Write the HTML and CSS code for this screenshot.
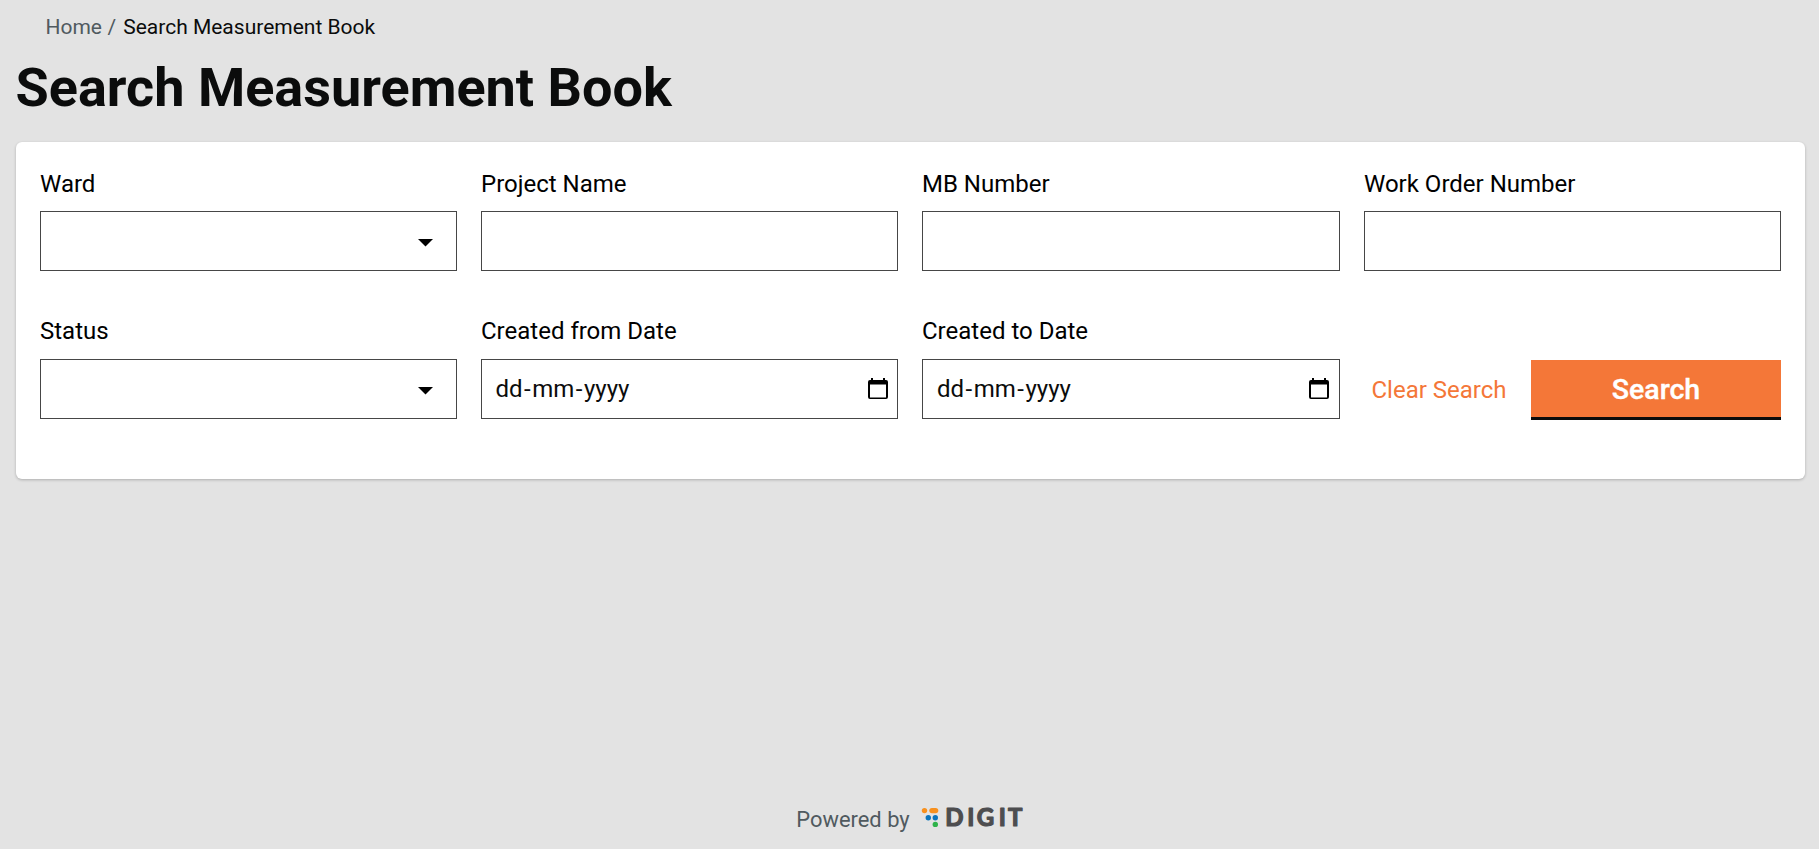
FILE: index.html
```html
<!DOCTYPE html>
<html lang="en">
<head>
<meta charset="utf-8">
<title>Search Measurement Book</title>
<link rel="stylesheet" href="styles.css">
</head>
<body>
<main class="page">
  <nav class="breadcrumb"><a class="crumb-link">Home</a><span class="crumb-sep">/</span><span>Search Measurement Book</span></nav>
  <h1 class="title">Search Measurement Book</h1>
  <form class="card">
    <div class="field">
      <label class="label">Ward</label>
      <div class="control select"><svg class="caret" viewBox="0 0 15 8"><path d="M0 0h15L7.500 7.500z"/></svg></div>
    </div>
    <div class="field">
      <label class="label">Project Name</label>
      <div class="control"></div>
    </div>
    <div class="field">
      <label class="label">MB Number</label>
      <div class="control"></div>
    </div>
    <div class="field">
      <label class="label">Work Order Number</label>
      <div class="control"></div>
    </div>
    <div class="field">
      <label class="label label-tall">Status</label>
      <div class="control select"><svg class="caret" viewBox="0 0 15 8"><path d="M0 0h15L7.500 7.500z"/></svg></div>
    </div>
    <div class="field">
      <label class="label label-tall">Created from Date</label>
      <div class="control date"><span>dd<span class="dash">-</span>mm<span class="dash">-</span>yyyy</span><svg class="calendar" viewBox="0 0 20 21"><path fill-rule="evenodd" d="M3 0h2v2h10V0h2v2h1a2 2 0 0 1 2 2v15a2 2 0 0 1-2 2H2a2 2 0 0 1-2-2V4a2 2 0 0 1 2-2h1zM2 6.500V19.500h16V6.500z"/></svg></div>
    </div>
    <div class="field">
      <label class="label label-tall">Created to Date</label>
      <div class="control date date-to"><span>dd<span class="dash">-</span>mm<span class="dash">-</span>yyyy</span><svg class="calendar" viewBox="0 0 20 21"><path fill-rule="evenodd" d="M3 0h2v2h10V0h2v2h1a2 2 0 0 1 2 2v15a2 2 0 0 1-2 2H2a2 2 0 0 1-2-2V4a2 2 0 0 1 2-2h1zM2 6.500V19.500h16V6.500z"/></svg></div>
    </div>
    <div class="actions">
      <a class="clear">Clear Search</a>
      <button class="submit" type="button">Search</button>
    </div>
  </form>
  <footer class="footer">
    <span class="powered">Powered by</span>
    <svg class="logo" viewBox="0 0 104 36">
      <g fill="#f7901e"><circle cx="3.500" cy="9.600" r="2.700"/><rect x="8.300" y="6.900" width="9" height="5.400" rx="2.700"/></g>
      <g fill="#0b74bc"><circle cx="7.300" cy="16.700" r="2.700"/><circle cx="14.300" cy="16.700" r="2.700"/></g>
      <circle cx="14.300" cy="23.400" r="2.700" fill="#2fb34a"/>
      <text class="wordmark" x="24.300 46.200 55.800 77.700 87" y="25.200">DIGIT</text>
    </svg>
  </footer>
</main>
</body>
</html>
```
FILE: styles.css
```css
* { box-sizing: border-box; }
body {
  margin: 0;
  background: #e3e3e3;
  color: #0b0c0c;
  font-family: Roboto, sans-serif;
}
.page {
  display: flex;
  flex-direction: column;
  height: 849px;
  padding: 0 14px 0 16px;
}
.breadcrumb {
  display: flex;
  padding: 15px 0 0 29.500px;
  font-size: 21px;
  line-height: 25px;
}
.crumb-link, .crumb-sep { color: #505a5f; }
.crumb-sep { margin: 0 7px 0 5.500px; }
.title {
  margin: 17px 0 0 -0.500px;
  font-size: 54px;
  font-weight: 700;
  line-height: 62px;
}
.card {
  display: grid;
  grid-template-columns: 417px 417px 418px 417px;
  column-gap: 24px;
  align-content: start;
  row-gap: 42px;
  height: 337px;
  margin: 23px 0 0;
  padding: 24px 24px 60px;
  background: #fff;
  border-radius: 6px;
  box-shadow: 0 1px 3px rgba(0, 0, 0, 0.24);
}
.field { display: flex; flex-direction: column; }
.label {
  height: 45px;
  color: #000;
  font-size: 24px;
  line-height: 36px;
}
.label-tall { height: 46px; }
.control {
  display: flex;
  align-items: center;
  height: 60px;
  border: 1px solid #464646;
  background: #fff;
}
.select { justify-content: flex-end; padding-right: 23px; }
.caret { width: 15px; height: 8px; margin-top: 4px; }
.date {
  justify-content: space-between;
  padding: 0 9px 0 13.500px;
  font-size: 24px;
}
.date-to { padding: 0 10px 0 14px; }
.dash { margin: 0 1.500px; }
.calendar { width: 20px; height: 21px; margin-bottom: 1px; }
.actions {
  display: flex;
  justify-content: space-between;
  height: 60px;
  margin-top: 47px;
  padding-left: 7.500px;
}
.clear {
  color: #f47738;
  font-size: 24px;
  line-height: 60px;
}
.submit {
  width: 250px;
  padding: 3px 0 0;
  border: 0;
  border-bottom: 3px solid #0b0c0c;
  background: #f47738;
  color: #fff;
  font: 500 28.500px/54px Roboto, sans-serif;
  -webkit-text-stroke: 0.400px #fff;
}
.footer {
  display: flex;
  justify-content: center;
  align-items: center;
  margin-top: auto;
  height: 60px;
}
.powered {
  padding-top: 1px;
  color: #505a5f;
  font-size: 21.900px;
  line-height: 34px;
}
.logo { width: 104px; height: 36px; margin-left: 11px; }
.wordmark {
  fill: #4d4d4f;
  stroke: #4d4d4f;
  stroke-width: 1.200;
  stroke-linejoin: round;
  font: 700 24px Lato, sans-serif;
}
```
